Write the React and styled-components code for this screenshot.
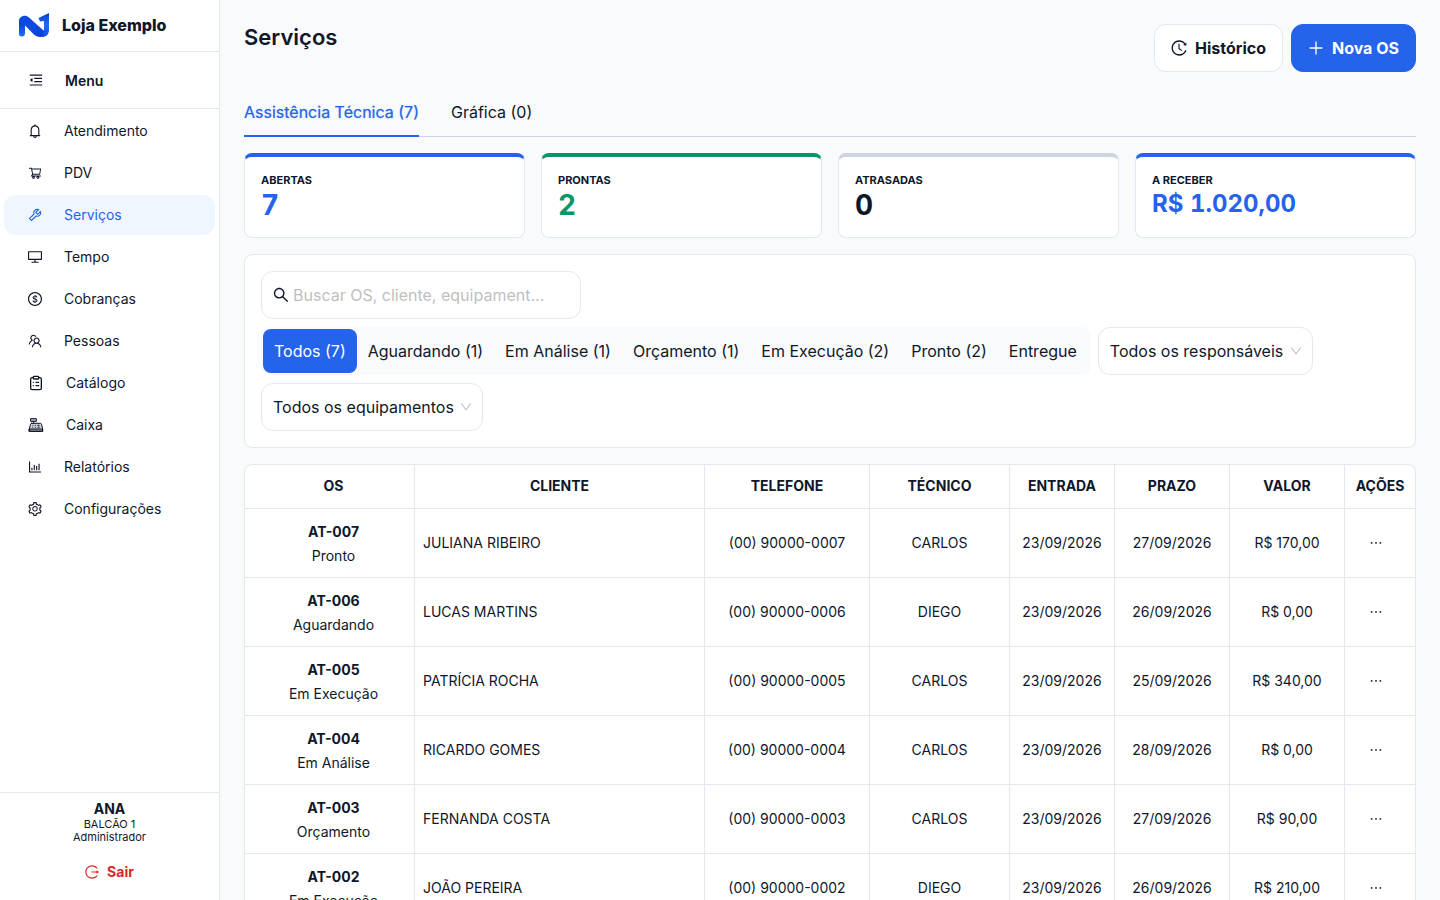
import styled, { createGlobalStyle } from "styled-components"
import { useState } from "react";
import {
  AiOutlineBarChart,
  AiOutlineBell,
  AiOutlineDesktop,
  AiOutlineDollar,
  AiOutlineDown,
  AiOutlineEllipsis,
  AiOutlineHistory,
  AiOutlineLogout,
  AiOutlineMenuFold,
  AiOutlinePlus,
  AiOutlineSearch,
  AiOutlineSetting,
  AiOutlineShoppingCart,
  AiOutlineTeam,
  AiOutlineTool,
} from "react-icons/ai";
import { LuClipboardList } from "react-icons/lu";

// crops the empty margin that the Ant icons carry
const tight = "64 64 896 896";

const RegisterIcon = ({ size }) => (
  <svg width={size} height={size} viewBox="0 0 24 24" fill="none" stroke="currentColor" strokeWidth="1.500" strokeLinecap="round" strokeLinejoin="round">
    <path d="M4.500 2.500h8v4h-8z" fill="currentColor" fillOpacity="0.3" />
    <path d="M8.500 6.500v3" />
    <path d="M5.500 9.500h13c1 0 1.600.6 1.800 1.500l1.700 7v3.500H2V18l1.700-7c.2-.9.800-1.500 1.800-1.500z" fill="currentColor" fillOpacity="0.2" />
    <path d="M2 18h20v3.500H2z" fill="currentColor" fillOpacity="0.3" />
    <path d="M7.500 12.500h.1M11 12.500h.1M14.500 12.500h2M7 15.300h.1M11 15.300h.1M15 15.300h2" />
  </svg>
);

const Logo = () => (
  <svg width="32" height="26" viewBox="0 0 32 26" aria-hidden="true">
    <defs>
      <linearGradient id="band" x1="0" y1="0" x2="1" y2="1">
        <stop offset="0" stopColor="#0d49dd" />
        <stop offset="0.5" stopColor="#0b4be6" />
        <stop offset="1" stopColor="#0a3fd0" />
      </linearGradient>
      <linearGradient id="leg" x1="0" y1="0" x2="0" y2="1">
        <stop offset="0" stopColor="#0a3ac4" />
        <stop offset="1" stopColor="#1b6cff" />
      </linearGradient>
      <linearGradient id="arrow" x1="0" y1="0" x2="0" y2="1">
        <stop offset="0" stopColor="#0a3cc8" />
        <stop offset="0.5" stopColor="#1b6cff" />
        <stop offset="1" stopColor="#0e4fe6" />
      </linearGradient>
    </defs>
    <path d="M1 9l6 2v10.500c0 2-1.500 3-3 3s-3-.5-3-2.500z" fill="url(#leg)" />
    <path d="M31 1v17c0 4.500-3 7-7 7l-1-5 3-2V9l-4 .5L20.500 6z" fill="url(#arrow)" />
    <path d="M1 12V9c0-4.500 6-7 10-3.500l14.500 13c-.5 3 1 5.500-2.500 6.500-3 .5-5-1-7-2.500L9 15.500c-3-3-6-5.500-8-3.500z" fill="url(#band)" />
  </svg>
);

const menu = [
  { label: "Atendimento", icon: AiOutlineBell },
  { label: "PDV", icon: AiOutlineShoppingCart, viewBox: "0 0 1024 1024" },
  { label: "Serviços", icon: AiOutlineTool },
  { label: "Tempo", icon: AiOutlineDesktop },
  { label: "Cobranças", icon: AiOutlineDollar },
  { label: "Pessoas", icon: AiOutlineTeam },
  { label: "Catálogo", icon: LuClipboardList, size: 16, viewBox: "0 0 24 24" },
  { label: "Caixa", icon: RegisterIcon, size: 16 },
  { label: "Relatórios", icon: AiOutlineBarChart },
  { label: "Configurações", icon: AiOutlineSetting },
];

const tabs = ["Assistência Técnica (7)", "Gráfica (0)"];

const stats = [
  { label: "ABERTAS", value: "7", line: "#2563eb", color: "#2563eb" },
  { label: "PRONTAS", value: "2", line: "#059669", color: "#059669" },
  { label: "ATRASADAS", value: "0", line: "#cbd5e1", color: "#0f172a" },
  { label: "A RECEBER", value: "R$ 1.020,00", line: "#2563eb", color: "#2563eb", small: true },
];

const filters = [
  "Todos (7)",
  "Aguardando (1)",
  "Em Análise (1)",
  "Orçamento (1)",
  "Em Execução (2)",
  "Pronto (2)",
  "Entregue",
];

const columns = [
  { title: "OS", width: 170 },
  { title: "CLIENTE", width: 290 },
  { title: "TELEFONE", width: 165 },
  { title: "TÉCNICO", width: 140 },
  { title: "ENTRADA", width: 105 },
  { title: "PRAZO", width: 115 },
  { title: "VALOR", width: 115 },
  { title: "AÇÕES", width: 70 },
];

const orders = [
  { os: "AT-007", status: "Pronto", client: "JULIANA RIBEIRO", phone: "(00) 90000-0007", tech: "CARLOS", start: "23/09/2026", due: "27/09/2026", price: "R$ 170,00" },
  { os: "AT-006", status: "Aguardando", client: "LUCAS MARTINS", phone: "(00) 90000-0006", tech: "DIEGO", start: "23/09/2026", due: "26/09/2026", price: "R$ 0,00" },
  { os: "AT-005", status: "Em Execução", client: "PATRÍCIA ROCHA", phone: "(00) 90000-0005", tech: "CARLOS", start: "23/09/2026", due: "25/09/2026", price: "R$ 340,00" },
  { os: "AT-004", status: "Em Análise", client: "RICARDO GOMES", phone: "(00) 90000-0004", tech: "CARLOS", start: "23/09/2026", due: "28/09/2026", price: "R$ 0,00" },
  { os: "AT-003", status: "Orçamento", client: "FERNANDA COSTA", phone: "(00) 90000-0003", tech: "CARLOS", start: "23/09/2026", due: "27/09/2026", price: "R$ 90,00" },
  { os: "AT-002", status: "Em Execução", client: "JOÃO PEREIRA", phone: "(00) 90000-0002", tech: "DIEGO", start: "23/09/2026", due: "26/09/2026", price: "R$ 210,00" },
];

const App = () => {
  const [page, setPage] = useState("Serviços");
  const [tab, setTab] = useState(tabs[0]);
  const [filter, setFilter] = useState(filters[0]);

  return (
    <Layout>
      <GlobalStyle />
      <Sidebar>
        <Brand>
          <Logo />
          Loja Exemplo
        </Brand>
        <MenuToggle type="button">
          <AiOutlineMenuFold size={16} />
          Menu
        </MenuToggle>
        <Nav>
          {menu.map(({ label, icon: Icon, size = 14, viewBox = tight }) => (
            <NavItem key={label} href="#" $active={label === page} onClick={() => setPage(label)}>
              <Icon size={size} viewBox={viewBox} />
              {label}
            </NavItem>
          ))}
        </Nav>
        <UserBox>
          <UserName>ANA</UserName>
          <UserInfo>BALCÃO 1</UserInfo>
          <UserInfo>Administrador</UserInfo>
          <Logout type="button">
            <AiOutlineLogout size={14} viewBox={tight} />
            Sair
          </Logout>
        </UserBox>
      </Sidebar>

      <Main>
        <Header>
          <Title>Serviços</Title>
          <Actions>
            <Button type="button">
              <AiOutlineHistory size={16} viewBox={tight} />
              Histórico
            </Button>
            <Button type="button" $primary>
              <AiOutlinePlus size={16} viewBox={tight} />
              Nova OS
            </Button>
          </Actions>
        </Header>

        <Tabs>
          {tabs.map((value) => (
            <Tab key={value} type="button" $active={value === tab} onClick={() => setTab(value)}>
              {value}
            </Tab>
          ))}
        </Tabs>

        <Stats>
          {stats.map((stat) => (
            <StatCard key={stat.label} $line={stat.line}>
              <StatLabel>{stat.label}</StatLabel>
              <StatValue $color={stat.color} $small={stat.small}>{stat.value}</StatValue>
            </StatCard>
          ))}
        </Stats>

        <FilterCard>
          <Search>
            <AiOutlineSearch size={16} viewBox={tight} />
            <input type="text" aria-label="Buscar" placeholder="Buscar OS, cliente, equipament..." />
          </Search>
          <Segmented>
            {filters.map((value) => (
              <Segment key={value} type="button" $active={value === filter} onClick={() => setFilter(value)}>
                {value}
              </Segment>
            ))}
          </Segmented>
          <SelectBox>
            <select aria-label="Responsáveis">
              <option>Todos os responsáveis</option>
            </select>
            <AiOutlineDown size={12} viewBox={tight} />
          </SelectBox>
          <SelectBox>
            <select aria-label="Equipamentos">
              <option>Todos os equipamentos</option>
            </select>
            <AiOutlineDown size={12} viewBox={tight} />
          </SelectBox>
        </FilterCard>

        <TableCard>
          <Table>
            <colgroup>
              {columns.map((column) => (
                <col key={column.title} width={column.width} />
              ))}
            </colgroup>
            <thead>
              <tr>
                {columns.map((column) => (
                  <HeadCell key={column.title}>{column.title}</HeadCell>
                ))}
              </tr>
            </thead>
            <tbody>
              {orders.map((order) => (
                <tr key={order.os}>
                  <OrderCell>
                    <strong>{order.os}</strong>
                    <div>{order.status}</div>
                  </OrderCell>
                  <Cell $left>{order.client}</Cell>
                  <Cell>{order.phone}</Cell>
                  <Cell>{order.tech}</Cell>
                  <Cell>{order.start}</Cell>
                  <Cell>{order.due}</Cell>
                  <Cell>{order.price}</Cell>
                  <ActionCell>
                    <MoreButton type="button" aria-label="Ações">
                      <AiOutlineEllipsis size={14} viewBox={tight} />
                    </MoreButton>
                  </ActionCell>
                </tr>
              ))}
            </tbody>
          </Table>
        </TableCard>
      </Main>
    </Layout>
  )
}

export default App

const GlobalStyle = createGlobalStyle`
  * {
    box-sizing: border-box;
  }
  body {
    margin: 0;
    background: #f8fafc;
    color: #0f172a;
    font-family: Inter, "Liberation Sans", sans-serif;
    font-size: 14px;
  }
  button, input, select {
    font-family: inherit;
    color: inherit;
  }
  svg {
    flex-shrink: 0;
  }
`;

const Layout = styled.div`
  display: flex;
  height: 100vh;
  overflow: hidden;
`;

const Sidebar = styled.aside`
  display: flex;
  flex-direction: column;
  flex: 0 0 220px;
  background: #fff;
  border-right: 1px solid #e2e8f0;
`;

const Brand = styled.div`
  display: flex;
  align-items: center;
  gap: 12px;
  height: 52px;
  padding: 0 18px 1px;
  border-bottom: 1px solid #e2e8f0;
  font-size: 16px;
  font-weight: 800;
  line-height: 20px;
`;

const MenuToggle = styled.button`
  display: flex;
  align-items: center;
  gap: 21px;
  height: 57px;
  padding: 0 28px;
  border: none;
  border-bottom: 1px solid #e2e8f0;
  background: none;
  font-size: 14px;
  font-weight: 600;
`;

const Nav = styled.nav`
  display: flex;
  flex-direction: column;
  gap: 2px;
  flex: 1;
  padding: 2px 4px;
`;

const NavItem = styled.a`
  display: flex;
  align-items: center;
  gap: 22px;
  height: 40px;
  padding: 0 24px;
  border-radius: 12px;
  line-height: 22px;
  text-decoration: none;
  color: ${(props) => props.$active ? "#2563eb" : "#0f172a"};
  background: ${(props) => props.$active ? "#eff6ff" : "transparent"};
`;

const UserBox = styled.div`
  display: flex;
  flex-direction: column;
  align-items: center;
  padding: 7px 12px 12px;
  border-top: 1px solid #e2e8f0;
`;

const UserName = styled.strong`
  font-weight: 700;
  line-height: 18px;
`;

const UserInfo = styled.span`
  font-size: 11px;
  line-height: 13px;
`;

const Logout = styled.button`
  display: flex;
  align-items: center;
  gap: 8px;
  height: 32px;
  margin-top: 12px;
  border: none;
  background: none;
  color: #dc2626;
  font-size: 14px;
  font-weight: 700;
  line-height: 22px;
`;

const Main = styled.main`
  display: flex;
  flex-direction: column;
  gap: 16px;
  flex: 1;
  min-width: 0;
  padding: 24px;
  overflow: hidden auto;
  scrollbar-width: none;

  > * {
    flex-shrink: 0;
  }
`;

const Header = styled.header`
  display: flex;
  justify-content: space-between;
  align-items: flex-start;
`;

const Title = styled.h1`
  margin: 0;
  font-size: 22px;
  font-weight: 600;
  line-height: 26px;
`;

const Actions = styled.div`
  display: flex;
  gap: 8px;
`;

const Button = styled.button`
  display: flex;
  align-items: center;
  gap: 8px;
  height: 48px;
  padding: 0 16px;
  border: 1px solid ${(props) => props.$primary ? "#2563eb" : "#e2e8f0"};
  border-radius: 12px;
  background: ${(props) => props.$primary ? "#2563eb" : "#fff"};
  color: ${(props) => props.$primary ? "#fff" : "#0f172a"};
  font-size: 16px;
  font-weight: 700;
`;

const Tabs = styled.div`
  display: flex;
  gap: 32px;
  height: 49px;
  border-bottom: 1px solid #cbd5e1;
`;

const Tab = styled.button`
  height: 49px;
  padding: 0;
  border: none;
  border-bottom: 2px solid ${(props) => props.$active ? "#2563eb" : "transparent"};
  background: none;
  font-size: 16px;
  line-height: 24px;
  color: ${(props) => props.$active ? "#2563eb" : "#0f172a"};
  text-shadow: ${(props) => props.$active ? "0 0 1px #2563eb80" : "none"};
`;

const Stats = styled.section`
  display: grid;
  grid-template-columns: repeat(4, 1fr);
  gap: 16px;
`;

const StatCard = styled.div`
  padding: 16px 16px 14px;
  border: 1px solid #e2e8f0;
  border-top: 4px solid ${(props) => props.$line};
  border-radius: 8px;
  background: #fff;
`;

const StatLabel = styled.div`
  font-size: 11px;
  font-weight: 700;
  line-height: 14px;
`;

const StatValue = styled.div`
  font-size: ${(props) => props.$small ? "24px" : "28px"};
  font-weight: 700;
  font-variant-numeric: tabular-nums;
  line-height: ${(props) => props.$small ? "33px" : "36px"};
  color: ${(props) => props.$color};
`;

const FilterCard = styled.section`
  display: flex;
  flex-wrap: wrap;
  gap: 8px;
  padding: 16px;
  border: 1px solid #e2e8f0;
  border-radius: 8px;
  background: #fff;
`;

const Search = styled.label`
  display: flex;
  align-items: center;
  gap: 4px;
  width: 320px;
  height: 48px;
  padding: 0 11px;
  margin-right: 50%;
  border: 1px solid #e2e8f0;
  border-radius: 12px;

  input {
    flex: 1;
    min-width: 0;
    padding: 0;
    border: none;
    outline: none;
    background: none;
    font-size: 16px;
    text-overflow: ellipsis;
  }
  input::placeholder {
    color: #bfbfbf;
  }
`;

const Segmented = styled.div`
  display: flex;
  height: 48px;
  padding: 2px;
  border-radius: 8px;
  background: #f8fafc;
`;

const Segment = styled.button`
  padding: 0 11px;
  border: none;
  border-radius: 8px;
  font-size: 16px;
  white-space: nowrap;
  color: ${(props) => props.$active ? "#fff" : "#0f172a"};
  background: ${(props) => props.$active ? "#2563eb" : "transparent"};
`;

const SelectBox = styled.div`
  display: grid;
  align-items: center;
  height: 48px;
  border: 1px solid #e2e8f0;
  border-radius: 12px;
  background: #fff;

  select, svg {
    grid-area: 1 / 1;
  }
  select {
    height: 46px;
    padding: 0 28px 0 11px;
    border: none;
    outline: none;
    appearance: none;
    background: none;
    font-size: 16px;
  }
  svg {
    justify-self: end;
    margin-right: 10px;
    color: #bfbfbf;
    pointer-events: none;
  }
`;

const TableCard = styled.section`
  border: 1px solid #e2e8f0;
  border-radius: 8px;
  background: #fff;
  overflow: hidden;
`;

const Table = styled.table`
  width: 100%;
  border-collapse: separate;
  border-spacing: 0;
  table-layout: fixed;

  th:first-child {
    padding-left: 8px;
  }
  th:last-child, td:last-child {
    border-right: none;
  }
`;

const HeadCell = styled.th`
  height: 44px;
  padding: 0 0 1px;
  border-right: 1px solid #e2e8f0;
  border-bottom: 1px solid #e2e8f0;
  font-weight: 700;
  line-height: 22px;
`;

const Cell = styled.td`
  height: 69px;
  padding: 0 8px;
  border-right: 1px solid #e2e8f0;
  border-bottom: 1px solid #e2e8f0;
  line-height: 24px;
  text-align: ${(props) => props.$left ? "left" : "center"};
`;

const OrderCell = styled(Cell)`
  padding: 2px 8px 0 16px;

  strong {
    font-weight: 700;
  }
`;

const ActionCell = styled(Cell)`
  padding: 0 16px 2px 8px;
`;

const MoreButton = styled.button`
  display: inline-flex;
  padding: 4px;
  border: none;
  background: none;
  vertical-align: middle;
`;
